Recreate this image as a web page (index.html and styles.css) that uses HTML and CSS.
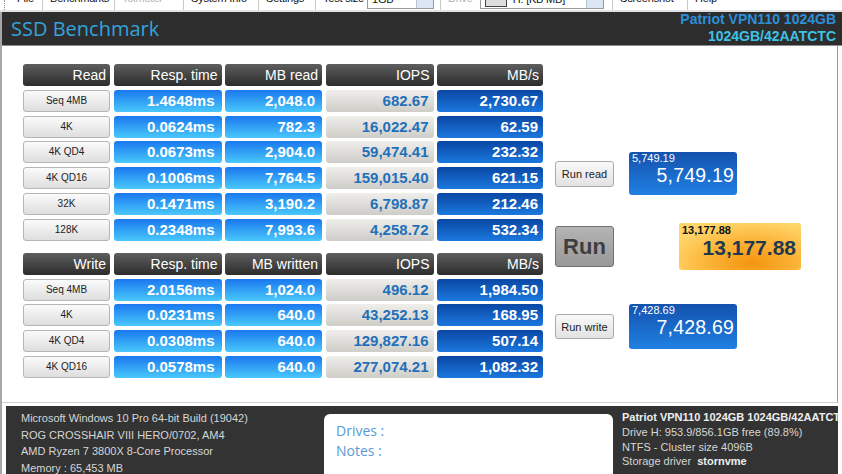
FILE: index.html
```html
<!DOCTYPE html>
<html>
<head>
  <meta name="viewport" content="width=device-width, initial-scale=1.0">
  <link rel="stylesheet" href="styles.css">
</head>

<body>
  <nav class="menu">
    <span class="grip"></span>
    <span class="item first">File</span>
    <span class="item w72">Benchmarks</span>
    <span class="item w69 off">Tolmeter</span>
    <span class="item w75">System Info</span>
    <span class="item w57">Settings</span>
    <span class="item w125">Test size <span class="combo small">1GB<b></b></span></span>
    <span class="item w172 off">Drive <span class="combo big"><i></i>H: [KB MB]<b></b></span></span>
    <span class="item w75">Screenshot</span>
    <span class="item w55">Help</span>
  </nav>

  <div class="win">
    <header>
      <h1>SSD Benchmark</h1>
      <div class="model">
        <div class="m1">Patriot VPN110 1024GB</div>
        <div class="m2">1024GB/42AATCTC</div>
      </div>
    </header>

    <section class="main">
      <div class="tables">
        <div class="grid">
          <div class="th">Read</div><div class="th">Resp. time</div><div class="th">MB read</div><div class="th">IOPS</div><div class="th">MB/s</div>
          <div class="lbl">Seq 4MB</div><div class="rt">1.4648ms</div><div class="rt">2,048.0</div><div class="io">682.67</div><div class="mbs">2,730.67</div>
          <div class="lbl">4K</div><div class="rt">0.0624ms</div><div class="rt">782.3</div><div class="io">16,022.47</div><div class="mbs">62.59</div>
          <div class="lbl">4K QD4</div><div class="rt">0.0673ms</div><div class="rt">2,904.0</div><div class="io">59,474.41</div><div class="mbs">232.32</div>
          <div class="lbl">4K QD16</div><div class="rt">0.1006ms</div><div class="rt">7,764.5</div><div class="io">159,015.40</div><div class="mbs">621.15</div>
          <div class="lbl">32K</div><div class="rt">0.1471ms</div><div class="rt">3,190.2</div><div class="io">6,798.87</div><div class="mbs">212.46</div>
          <div class="lbl">128K</div><div class="rt">0.2348ms</div><div class="rt">7,993.6</div><div class="io">4,258.72</div><div class="mbs">532.34</div>
        </div>

        <div class="grid write">
          <div class="th">Write</div><div class="th">Resp. time</div><div class="th">MB written</div><div class="th">IOPS</div><div class="th">MB/s</div>
          <div class="lbl">Seq 4MB</div><div class="rt">2.0156ms</div><div class="rt">1,024.0</div><div class="io">496.12</div><div class="mbs">1,984.50</div>
          <div class="lbl">4K</div><div class="rt">0.0231ms</div><div class="rt">640.0</div><div class="io">43,252.13</div><div class="mbs">168.95</div>
          <div class="lbl">4K QD4</div><div class="rt">0.0308ms</div><div class="rt">640.0</div><div class="io">129,827.16</div><div class="mbs">507.14</div>
          <div class="lbl">4K QD16</div><div class="rt">0.0578ms</div><div class="rt">640.0</div><div class="io">277,074.21</div><div class="mbs">1,082.32</div>
        </div>
      </div>

      <div class="side">
        <div class="row r1">
          <button class="btn">Run read</button>
          <div class="res">
            <div class="sm">5,749.19</div>
            <div class="lg">5,749.19</div>
          </div>
        </div>
        <div class="row r2">
          <button class="run">Run</button>
          <div class="total">
            <div class="sm">13,177.88</div>
            <div class="lg">13,177.88</div>
          </div>
        </div>
        <div class="row r3">
          <button class="btn">Run write</button>
          <div class="res">
            <div class="sm">7,428.69</div>
            <div class="lg">7,428.69</div>
          </div>
        </div>
      </div>
    </section>

    <footer>
      <div class="sys">
        <div>Microsoft Windows 10 Pro 64-bit Build (19042)</div>
        <div>ROG CROSSHAIR VIII HERO/0702, AM4</div>
        <div>AMD Ryzen 7 3800X 8-Core Processor</div>
        <div>Memory : 65,453 MB</div>
      </div>
      <div class="notes">
        <div>Drives :</div>
        <div>Notes :</div>
      </div>
      <div class="drive">
        <div class="name">Patriot VPN110 1024GB 1024GB/42AATCTC</div>
        <div>Drive H: 953.9/856.1GB free (89.8%)</div>
        <div>NTFS - Cluster size 4096B</div>
        <div>Storage driver &nbsp;<b>stornvme</b></div>
      </div>
    </footer>
  </div>
</body>
</html>
```

FILE: styles.css
```css
body {
  margin: 0;
  background-color: #fff;
  font-family: "Liberation Sans", Arial, sans-serif;
  overflow: hidden;
}

/* menu strip, only its lower edge is in view */
.menu {
  height: 10px;
  overflow: hidden;
  display: flex;
  align-items: flex-start;
  background: #fff;
  border-bottom: 2px solid #e2e2e2;
  font-size: 11px;
  letter-spacing: -0.2px;
  color: #111;
}

.grip {
  width: 2px;
  height: 10px;
  margin-left: 4px;
  border-left: 1px dotted #999;
}

.menu .item {
  display: flex;
  align-items: flex-start;
  box-sizing: border-box;
  margin-top: -9px;
  height: 20px;
  line-height: 14px;
  padding: 0 0 0 7px;
  border-left: 1px solid #c8c8c8;
  white-space: nowrap;
}

.menu .first {
  width: 35px;
  border-left: none;
  padding-left: 10px;
}

.w55 { width: 55px; }
.w57 { width: 57px; }
.w69 { width: 69px; }
.w72 { width: 72px; }
.w75 { width: 75px; }
.w125 { width: 125px; }
.w172 { width: 172px; }

.menu .off {
  color: #b0b0b0;
}

.combo {
  display: inline-flex;
  box-sizing: border-box;
  height: 18px;
  border: 1px solid #9a9a9a;
  background: #fff;
  color: #111;
  padding-left: 4px;
}

.combo.small {
  width: 67px;
  margin-left: 3px;
}

.combo.big {
  width: 124px;
  margin-left: 7px;
}

.combo b {
  margin-left: auto;
  width: 16px;
  background: #dce6f2;
  border-left: 1px solid #b8c4d4;
}

.combo i {
  width: 20px;
  height: 10px;
  margin: 3px 6px 0 0;
  border: 1px solid #444;
  background: #ddd;
}

.win {
  border-left: 2px solid #a8a8a8;
}

header {
  height: 33px;
  background-color: #2d2d2d;
  border-bottom: 1px solid #8c8c8c;
  display: flex;
  justify-content: space-between;
}

header h1 {
  margin: 0 0 0 9px;
  font-family: "Open Sans", sans-serif;
  font-weight: normal;
  font-size: 20px;
  line-height: 33px;
  color: #33a3db;
}

.model {
  text-align: right;
  font-weight: bold;
  font-size: 14px;
  line-height: 17px;
  padding: 0 6px 0 0;
  margin-top: -1px;
}

.m1 {
  color: #2d8fda;
}

.m2 {
  color: #3cc2e6;
}

.main {
  width: 835px;
  height: 356px;
  border-right: 1px solid #9c9c9c;
  border-bottom: 1px solid #cfcfcf;
  display: flex;
}

.tables {
  padding: 18px 0 0 21px;
}

.grid {
  display: grid;
  grid-template-columns: 87px 108px 97px 108px 106px;
  grid-auto-rows: 22px;
  column-gap: 3.5px;
  row-gap: 3.8px;
}

.grid.write {
  margin-top: 12px;
}

.th {
  background: linear-gradient(#5e5e5e, #2c2c2c);
  border-radius: 3px;
  color: #fff;
  font-size: 14px;
  line-height: 22px;
  text-align: right;
  padding-right: 4px;
}

.lbl {
  background: linear-gradient(#fbfbfb, #dedede);
  border: 1px solid #b6b6b6;
  border-radius: 3px;
  font-size: 10px;
  line-height: 20px;
  text-align: center;
  color: #222;
}

.rt, .io, .mbs {
  border-radius: 3px;
  font-weight: bold;
  font-size: 15px;
  line-height: 22px;
  text-align: right;
  padding-right: 5px;
}

.rt {
  background: linear-gradient(#1a78ef, #4ac8fb);
  color: #fff;
  padding-right: 7px;
}

.io {
  background: linear-gradient(#efeeeb, #cfcdc8);
  color: #1f70ba;
}

.mbs {
  background: linear-gradient(#0a47a4, #1b78de);
  color: #fff;
}

.side {
  margin-left: 12px;
  padding-top: 106px;
}

.row {
  display: flex;
  align-items: center;
}

.r1 {
  height: 43px;
}

.r2 {
  height: 47px;
  margin-top: 28px;
}

.r3 {
  height: 45px;
  margin-top: 34px;
}

.btn {
  width: 59px;
  height: 26px;
  padding: 0;
  background: linear-gradient(#f9f9f9, #e2e2e2);
  border: 1px solid #aaa;
  border-radius: 3px;
  font-family: "Liberation Sans", Arial, sans-serif;
  font-size: 11px;
  color: #222;
}

.r3 .btn {
  height: 25px;
}

.run {
  width: 59px;
  height: 41px;
  padding: 0;
  background: linear-gradient(#b4b4b4, #999);
  border: 1px solid #707070;
  border-radius: 3px;
  font-family: "Liberation Sans", Arial, sans-serif;
  font-weight: bold;
  font-size: 22px;
  color: #3e3e3e;
}

.res {
  width: 108px;
  height: 100%;
  margin-left: 15px;
  box-sizing: border-box;
  background: linear-gradient(#1452ae, #2080e2);
  border-radius: 3px;
  color: #fff;
  padding: 1px 3px 0 3px;
}

.res .sm {
  font-size: 11px;
  line-height: 11px;
}

.res .lg {
  font-size: 19.5px;
  line-height: 22px;
  text-align: right;
  letter-spacing: 0.2px;
}

.total {
  width: 122px;
  height: 100%;
  margin-left: 65px;
  box-sizing: border-box;
  background: radial-gradient(ellipse 70% 90% at 60% 85%, #f59510, #fcb53a 55%, #ffd56a 100%);
  border-radius: 3px;
  padding: 2px 5px 0 3px;
}

.total .sm {
  font-weight: bold;
  font-size: 11px;
  line-height: 11px;
  color: #111;
}

.total .lg {
  font-weight: bold;
  font-size: 21px;
  line-height: 24px;
  text-align: right;
  color: #22384f;
}

footer {
  margin: 3px 4px 0 4px;
  height: 70px;
  background-color: #333;
  display: flex;
  font-size: 11px;
  color: #d6d6d6;
}

.sys {
  width: 303px;
  padding: 4px 0 0 15px;
  line-height: 16.6px;
  white-space: nowrap;
}

.notes {
  width: 265px;
  margin-top: 8px;
  padding: 7px 12px 0 12px;
  background: #fff;
  border-radius: 6px 6px 0 0;
  font-family: "Open Sans", sans-serif;
  font-size: 14px;
  line-height: 20px;
  color: #5b9ad6;
}

.drive {
  flex: 1;
  margin-left: 9px;
  padding-top: 4px;
  line-height: 14.8px;
  white-space: nowrap;
  overflow: hidden;
}

.drive .name {
  font-weight: bold;
  color: #eee;
}

.drive b {
  color: #eee;
}
```
